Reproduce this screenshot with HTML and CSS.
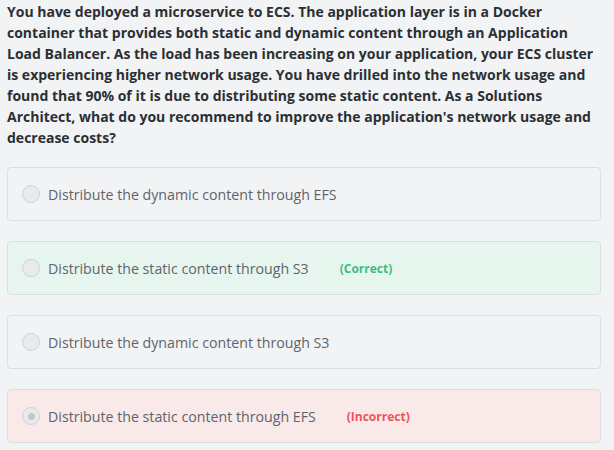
FILE: index.html
```html
<!DOCTYPE html>
<html>
<head>
<meta charset="utf-8">
<link rel="stylesheet" href="styles.css">
</head>
<body>
<div class="quiz">
  <p class="question">You have deployed a microservice to ECS. The application layer is in a Docker container that provides both static and dynamic content through an Application Load Balancer. As the load has been increasing on your application, your ECS cluster is experiencing higher network usage. You have drilled into the network usage and found that 90% of it is due to distributing some static content. As a Solutions Architect, what do you recommend to improve the application's network usage and decrease costs?</p>
  <div class="options">
    <label class="option">
      <span class="radio"></span>
      <span class="text">Distribute the dynamic content through EFS</span>
    </label>
    <label class="option correct">
      <span class="radio"></span>
      <span class="text">Distribute the static content through S3</span>
      <span class="tag tag-correct">(Correct)</span>
    </label>
    <label class="option">
      <span class="radio"></span>
      <span class="text">Distribute the dynamic content through S3</span>
    </label>
    <label class="option incorrect">
      <span class="radio checked"></span>
      <span class="text">Distribute the static content through EFS</span>
      <span class="tag tag-incorrect">(Incorrect)</span>
    </label>
  </div>
</div>
</body>
</html>
```

FILE: styles.css
```css
html, body {
  margin: 0;
  padding: 0;
  background: #f2f3f5;
}
body {
  font-family: "Open Sans", "Noto Sans", sans-serif;
  color: #2b2f33;
}
.quiz {
  width: 594px;
  padding: 0 7px;
}
.question {
  margin: 0;
  padding-top: 1px;
  font-size: 14px;
  font-weight: 700;
  line-height: 21px;
  color: #2b2f33;
}
.options {
  display: flex;
  flex-direction: column;
  gap: 20px;
  margin-top: 19px;
}
.option {
  display: flex;
  align-items: center;
  height: 52px;
  border: 1px solid #dcdee2;
  border-radius: 4px;
  background: #f2f3f5;
  padding: 0 0 0 14px;
}
.option.correct {
  background: #e6f6ef;
}
.option.incorrect {
  background: #f9e9e9;
}
.radio {
  width: 18px;
  height: 18px;
  border: 1px solid #d0d2d6;
  border-radius: 50%;
  background: #e9eaec;
  box-sizing: border-box;
  display: flex;
  align-items: center;
  justify-content: center;
  flex: none;
}
.radio.checked::after {
  content: "";
  width: 7px;
  height: 7px;
  border-radius: 50%;
  background: #c4c6ca;
}
.text {
  margin-left: 8px;
  font-size: 14.2px;
  color: #5f646b;
}
.tag {
  margin-left: 31px;
  font-size: 12px;
  font-weight: 700;
}
.tag-correct {
  color: #3ebd87;
}
.tag-incorrect {
  color: #e8555b;
}
```
